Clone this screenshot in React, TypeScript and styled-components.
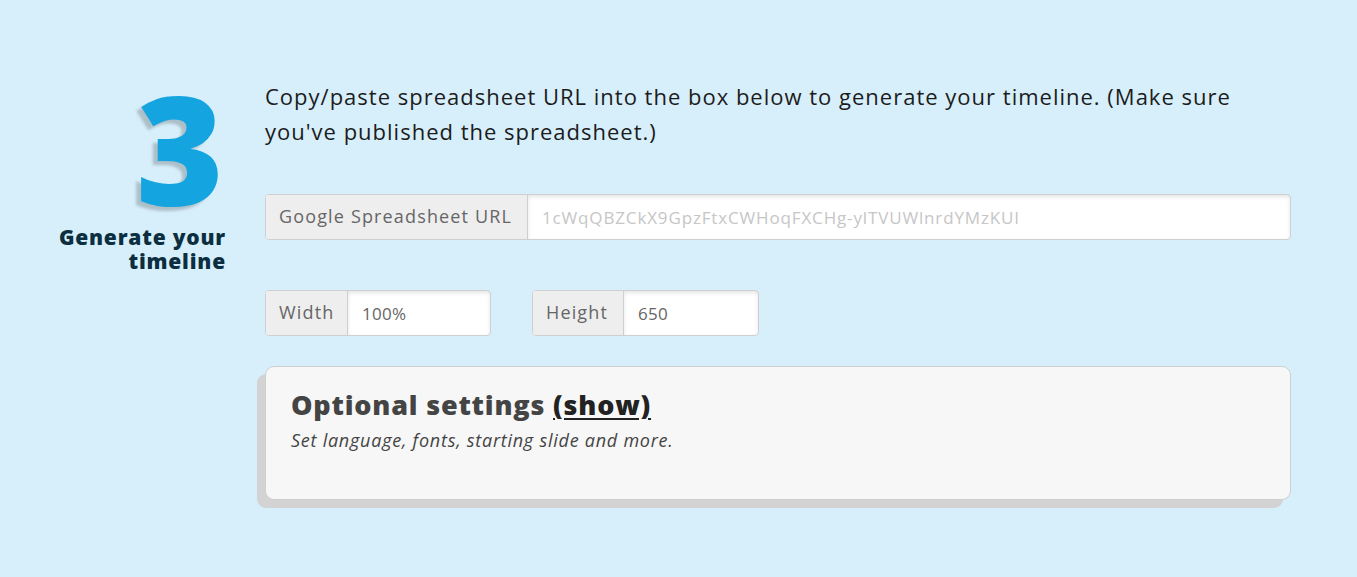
import styled, { createGlobalStyle } from "styled-components";

const GlobalStyle = createGlobalStyle`
    html, body {
        margin: 0;
        padding: 0;
        background: #d7effb;
    }
    body {
        font-family: "Open Sans", "Lato", sans-serif;
    }
`;

const Page = styled.div`
    width: 1357px;
    height: 577px;
    background: #d7effb;
    box-sizing: border-box;
    padding-top: 79px;
`;

const Step = styled.div`
    display: flex;
    align-items: flex-start;
`;

const StepLabel = styled.div`
    width: 226px;
    flex-shrink: 0;
    display: flex;
    flex-direction: column;
    align-items: flex-end;
`;

const StepNumber = styled.div`
    font-family: "Open Sans", sans-serif;
    font-weight: 800;
    font-size: 150px;
    line-height: 150px;
    color: #14a5e0;
    text-shadow: -5px 4px 3px rgba(0, 0, 0, 0.2);
    margin-right: 2px;
    margin-top: -6px;
`;

const StepTitle = styled.div`
    font-family: "Open Sans", sans-serif;
    font-weight: 800;
    font-size: 21px;
    line-height: 24px;
    color: #0b2f40;
    text-align: right;
    margin-top: 2px;
    letter-spacing: 0.8px;
`;

const Content = styled.div`
    margin-left: 39px;
    width: 1026px;
    display: flex;
    flex-direction: column;
`;

const Intro = styled.p`
    margin: 0;
    font-size: 22px;
    line-height: 35px;
    letter-spacing: 1px;
    color: #1c1c1c;
    white-space: nowrap;
`;

const InputGroup = styled.div<{ $width: string }>`
    display: flex;
    width: ${p => p.$width};
    height: 46px;
    box-sizing: border-box;
    border: 1px solid #cfcfcf;
    border-radius: 4px;
    overflow: hidden;
    background: #fff;
`;

const Addon = styled.div<{ $width: number }>`
    width: ${p => p.$width}px;
    flex-shrink: 0;
    box-sizing: border-box;
    background: #eeeeee;
    border-right: 1px solid #cfcfcf;
    display: flex;
    align-items: center;
    padding-left: 13px;
    font-size: 18px;
    letter-spacing: 1.15px;
    color: #666;
    padding-bottom: 2px;
`;

const Field = styled.div<{ $placeholder?: boolean }>`
    flex: 1;
    display: flex;
    align-items: center;
    padding-left: 14px;
    font-size: 17px;
    letter-spacing: ${p => (p.$placeholder ? "0.85px" : "0.3px")};
    color: ${p => (p.$placeholder ? "#c6c6c6" : "#666")};
    box-shadow: inset 0 2px 4px rgba(0, 0, 0, 0.1);
`;

const UrlRow = styled.div`
    margin-top: 45px;
`;

const SizeRow = styled.div`
    display: flex;
    gap: 41px;
    margin-top: 50px;
`;

const Card = styled.div`
    margin-top: 30px;
    height: 134px;
    box-sizing: border-box;
    background: #f7f7f7;
    border: 1px solid #cfcfcf;
    border-radius: 9px;
    box-shadow: -8px 8px 0 #d3d3d3;
    padding: 20px 25px;
`;

const CardTitle = styled.h3`
    margin: 0;
    font-size: 27px;
    font-weight: 800;
    color: #444;
    line-height: 36px;
    letter-spacing: 0.8px;
`;

const ShowLink = styled.a`
    color: #222;
    text-decoration: underline;
    text-decoration-thickness: 2px;
    text-underline-offset: 3px;
    cursor: pointer;
`;

const CardNote = styled.p`
    margin: 5px 0 0;
    font-style: italic;
    font-size: 18px;
    letter-spacing: 0.75px;
    color: #444;
`;

export default function App() {
    return (
        <>
            <GlobalStyle />
            <Page>
                <Step>
                    <StepLabel>
                        <StepNumber>3</StepNumber>
                        <StepTitle>Generate your<br />timeline</StepTitle>
                    </StepLabel>
                    <Content>
                        <Intro>
                            Copy/paste spreadsheet URL into the box below to generate your timeline. (Make sure<br />
                            you've published the spreadsheet.)
                        </Intro>
                        <UrlRow>
                            <InputGroup $width="100%">
                                <Addon $width={262}>Google Spreadsheet URL</Addon>
                                <Field $placeholder>1cWqQBZCkX9GpzFtxCWHoqFXCHg-ylTVUWlnrdYMzKUI</Field>
                            </InputGroup>
                        </UrlRow>
                        <SizeRow>
                            <InputGroup $width="226px">
                                <Addon $width={82}>Width</Addon>
                                <Field>100%</Field>
                            </InputGroup>
                            <InputGroup $width="227px">
                                <Addon $width={91}>Height</Addon>
                                <Field>650</Field>
                            </InputGroup>
                        </SizeRow>
                        <Card>
                            <CardTitle>Optional settings <ShowLink>(show)</ShowLink></CardTitle>
                            <CardNote>Set language, fonts, starting slide and more.</CardNote>
                        </Card>
                    </Content>
                </Step>
            </Page>
        </>
    );
}
